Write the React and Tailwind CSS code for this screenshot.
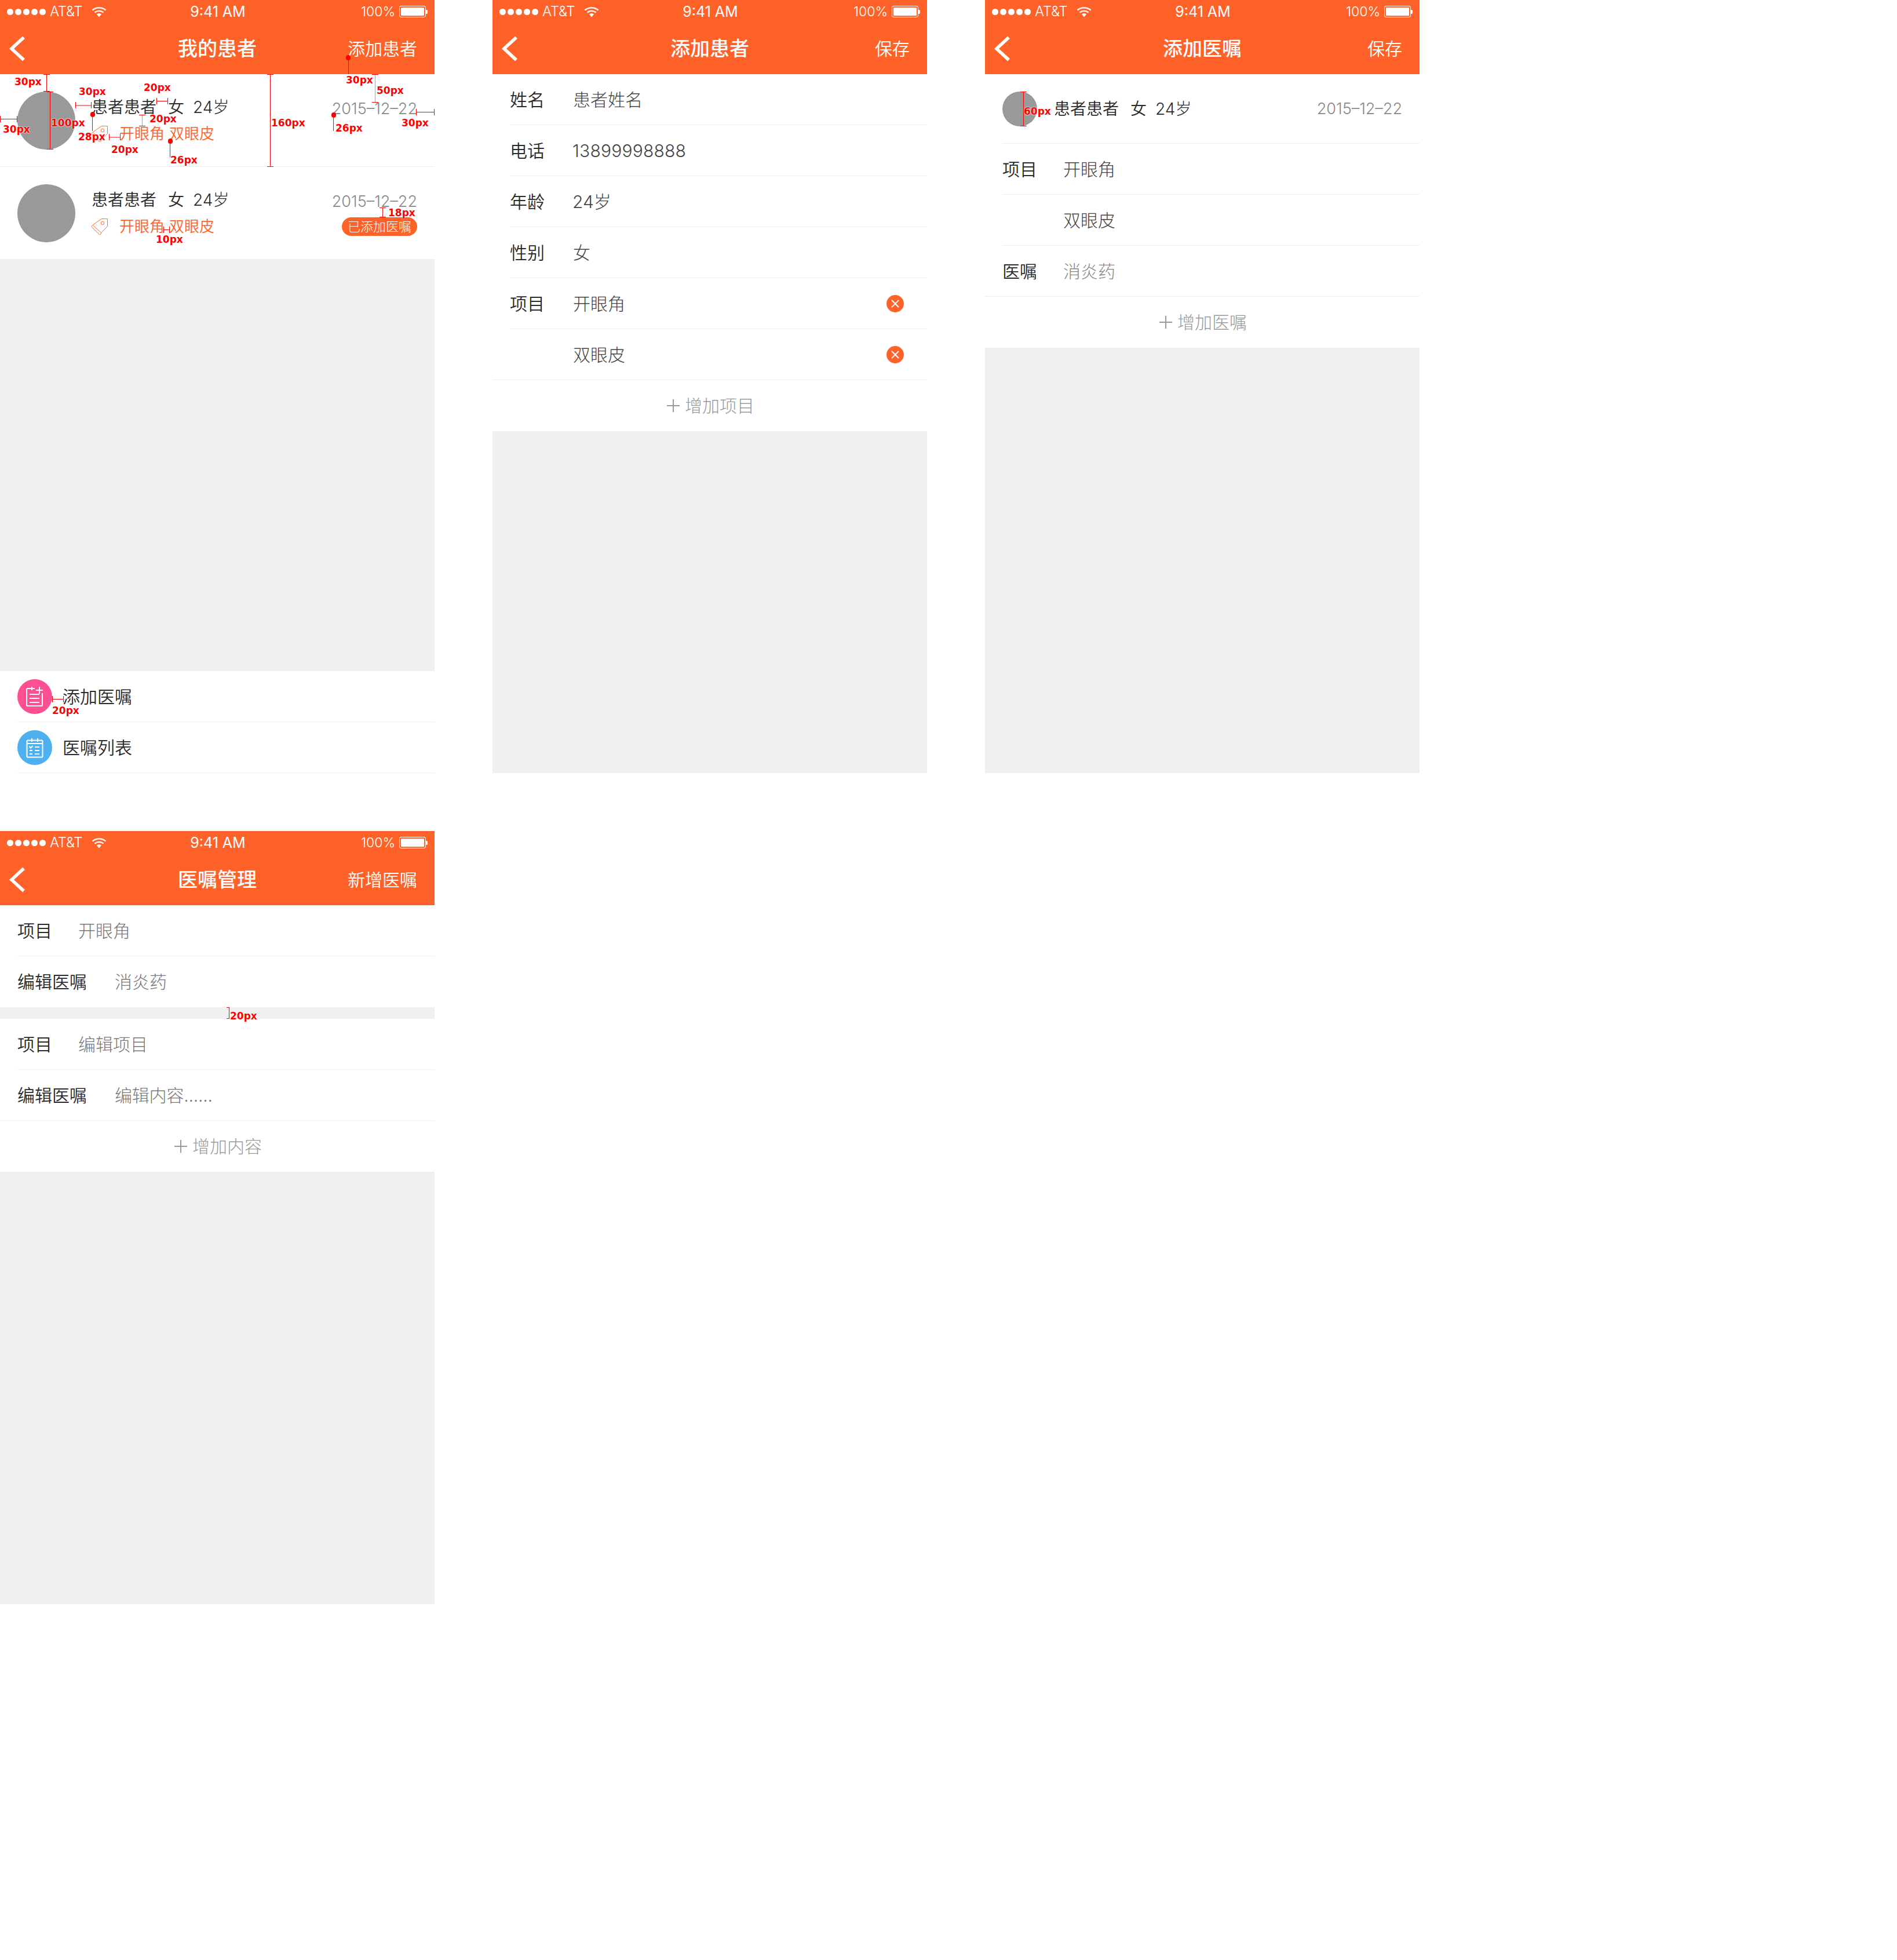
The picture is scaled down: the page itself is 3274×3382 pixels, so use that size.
import React from "react";
import clsx from "clsx";

function Mark({ className, children }) {
  return (
    <div className={clsx("absolute font-['DejaVu_Sans'] font-bold text-[17px] leading-[18px] text-[#f00] whitespace-nowrap [text-shadow:0_0_2px_#fff,0_0_2px_#fff]", className)}>
      {children}
    </div>
  );
}
function VDim({ className, soft }) {
  return (
    <div className={clsx("absolute w-[11px] border-y border-[#f00]", className)}>
      <div className={clsx("mx-auto w-px h-full", soft ? "bg-[#ff8080] w-[2px]" : "bg-[#f00]")} />
    </div>
  );
}
function HDim({ className, soft }) {
  return (
    <div className={clsx("absolute h-[11px] border-x border-[#f00] flex items-center", className)}>
      <div className={clsx("w-full", soft ? "bg-[#ff8080] h-[2px]" : "bg-[#f00] h-px")} />
    </div>
  );
}
function Leader({ className }) {
  return (
    <div className={clsx("absolute w-[9px] flex flex-col items-center", className)}>
      <div className="w-[8px] h-[9px] rounded-full bg-[#f00] shrink-0" />
      <div className="w-px flex-1 bg-[#f00]" />
    </div>
  );
}

function Wifi() {
  return (
    <svg width="26" height="19" viewBox="0 0 26 19" fill="none" stroke="#fff" strokeWidth="2.4">
      <path d="M1.5 6.5C8 1 18 1 24.5 6.5" />
      <path d="M5.5 10.5C10 7 16 7 20.5 10.5" />
      <path d="M9 13.5C11.5 11.5 14.5 11.5 17 13.5L13 18.5Z" fill="#fff" stroke="none" />
    </svg>
  );
}

function StatusBar() {
  return (
    <div className="h-[40px] grid grid-cols-[1fr_auto_1fr] items-center pl-[12px] pr-[12px] text-white leading-none font-light">
      <div className="flex items-center">
        <div className="flex gap-[3px]">
          <div className="w-[11px] h-[11px] rounded-full bg-white" />
          <div className="w-[11px] h-[11px] rounded-full bg-white" />
          <div className="w-[11px] h-[11px] rounded-full bg-white" />
          <div className="w-[11px] h-[11px] rounded-full bg-white" />
          <div className="w-[11px] h-[11px] rounded-full bg-white" />
        </div>
        <span className="ml-[7px] w-[58px] whitespace-nowrap text-[24px] tracking-[-0.3px]">AT&amp;T</span>
        <span className="ml-[14px] flex"><Wifi /></span>
      </div>
      <div className="text-[25px] font-normal ml-[2px]">9:41 AM</div>
      <div className="flex items-center justify-end">
        <span className="text-[23px]">100%</span>
        <div className="ml-[7px] w-[46px] h-[20px] border border-white rounded-[3px] p-[2px]">
          <div className="w-full h-full bg-white rounded-[1px]" />
        </div>
        <div className="w-[3px] h-[7px] bg-white rounded-r-[2px]" />
      </div>
    </div>
  );
}

function Header({ title, action }) {
  return (
    <div className="bg-[#ff6228] shrink-0">
      <StatusBar />
      <div className="h-[88px] grid grid-cols-[1fr_auto_1fr] items-center px-[30px] text-white">
        <svg className="-ml-[15px]" width="28" height="44" viewBox="0 0 28 44" fill="none" stroke="#fff" strokeWidth="5.5" strokeLinecap="square">
          <path d="M24 4.5L5 22L24 39.5" />
        </svg>
        <div className="text-[34px] font-medium leading-none">{title}</div>
        <div className="text-[30px] leading-none text-right font-[350]">{action}</div>
      </div>
    </div>
  );
}

function Tag() {
  return (
    <svg width="28" height="29" viewBox="0 0 28 29" fill="none" stroke="#ff6a2e" strokeWidth="1" strokeLinejoin="round">
      <path d="M17 .6H27.5V13.5L16.7 24.7L2 11.3Z" />
      <path d="M2 11.3L.8 12.6C.2 13.3.2 14.6.8 15.2L12.5 26.8C13.6 27.8 15.2 27.8 16 26.8L16.7 24.7" />
      <circle cx="19" cy="8" r="2.8" />
    </svg>
  );
}

function PersonLine() {
  return (
    <div className="flex items-center gap-[20px] text-[28px] leading-[28px] text-[#2a2a2a] font-[350]">
      <span>患者患者</span>
      <span className="-mr-[5px]">女</span>
      <span className="font-light">24岁</span>
    </div>
  );
}

function PatientRow({ badge }) {
  return (
    <div className="h-[160px] flex pl-[30px] pr-[30px] border-b border-[#eee] shrink-0">
      <div className="w-[100px] h-[100px] rounded-full bg-[#999] mt-[30px] shrink-0" />
      <div className="ml-[28px] flex flex-col justify-center gap-[19px]">
        <PersonLine />
        <div className="flex items-center h-[26px] text-[26px] leading-[26px] text-[#ff6228] font-[350]">
          <span className="flex"><Tag /></span>
          <span className="ml-[20px]">开眼角</span>
          <span className="ml-[8px]">双眼皮</span>
        </div>
      </div>
      <div className="ml-auto pt-[47px] flex flex-col items-end">
        <div className="text-[27px] leading-[26px] text-[#888] font-light">2015–12–22</div>
        {badge && (
          <div className="mt-[14px] h-[32px] w-[130px] rounded-full bg-[#ff6228] text-white text-[22px] leading-[32px] text-center font-light">已添加医嘱</div>
        )}
      </div>
    </div>
  );
}

function FormRow({ label, value, labelClass, valueClass, full, children }) {
  return (
    <div className={clsx("h-[88px] flex items-center border-b border-[#eee] shrink-0", full ? "pl-[30px]" : "ml-[30px]")}>
      <div className={clsx("text-[30px] leading-none text-[#2a2a2a] shrink-0 font-[350]", labelClass)}>{label}</div>
      <div className={clsx("text-[30px] leading-none font-light", valueClass)}>{value}</div>
      {children}
    </div>
  );
}

function Remove() {
  return (
    <svg className="ml-auto mr-[40px]" width="30" height="30" viewBox="0 0 30 30">
      <circle cx="15" cy="15" r="15" fill="#ff6228" />
      <path d="M9.5 9.5L20.5 20.5M20.5 9.5L9.5 20.5" stroke="#fff" strokeWidth="2" strokeLinecap="round" />
    </svg>
  );
}

function AddRow({ text }) {
  return (
    <div className="h-[88px] pl-[3px] flex items-center justify-center shrink-0 text-[30px] leading-none text-[#999] font-light">
      <svg width="22" height="22" viewBox="0 0 22 22" stroke="#999" strokeWidth="2">
        <path d="M11 0V22M0 11H22" />
      </svg>
      <span className="ml-[9px]">{text}</span>
    </div>
  );
}

function PinkIcon() {
  return (
    <svg width="60" height="60" viewBox="0 0 60 60" fill="none">
      <circle cx="30" cy="30" r="30" fill="#ff4f93" />
      <g stroke="#fff" strokeWidth="2">
        <path d="M30 16H17.5C16.6 16 16 16.6 16 17.5V44.5C16 45.4 16.6 46 17.5 46H41.5C42.4 46 43 45.4 43 44.5V24" />
        <path d="M25 13V19M38 13V25M32 19H44" />
        <path d="M21 26H38M21 33H38M21 40H38" />
      </g>
    </svg>
  );
}

function BlueIcon() {
  return (
    <svg width="60" height="60" viewBox="0 0 60 60" fill="none">
      <circle cx="30" cy="30" r="30" fill="#4fb0f0" />
      <g stroke="#fff" strokeWidth="2">
        <rect x="16.5" y="17.5" width="27" height="29" rx="1.5" />
        <path d="M16 23H44M25 14V20M35 14V20" />
        <path d="M20.5 28L23 30.5L26.5 27" />
        <path d="M30 29H38M21 35H26M30 35H38M21 41H26M30 41H38" />
      </g>
    </svg>
  );
}

function MenuRow({ icon, text }) {
  return (
    <div className="h-[88px] ml-[30px] flex items-center border-b border-[#eee] shrink-0">
      {icon}
      <span className="ml-[18px] text-[30px] leading-none text-[#2a2a2a] font-[350]">{text}</span>
    </div>
  );
}

function Phone({ children }) {
  return <div className="relative w-[750px] h-[1334px] bg-white flex flex-col shrink-0">{children}</div>;
}
function Fill() {
  return <div className="flex-1 bg-[#f0f0f0]" />;
}

export default function App() {
  return (
    <div className="w-[3274px] h-[3382px] bg-white flex flex-col gap-[100px] font-['Inter','Noto_Sans_CJK_SC',sans-serif]">
      <div className="flex gap-[100px]">
        <Phone>
          <Header title="我的患者" action="添加患者" />
          <PatientRow />
          <PatientRow badge />
          <Fill />
          <MenuRow icon={<PinkIcon />} text="添加医嘱" />
          <MenuRow icon={<BlueIcon />} text="医嘱列表" />

          <VDim className="left-[75px] top-[128px] h-[30px]" />
          <Mark className="left-[25px] top-[132px]">30px</Mark>
          <VDim className="left-[81px] top-[158px] h-[100px]" />
          <Mark className="left-[88px] top-[203px]">100px</Mark>
          <HDim className="left-0 top-[200px] w-[30px]" />
          <Mark className="left-[5px] top-[214px]">30px</Mark>
          <HDim className="left-[130px] top-[176px] w-[28px]" soft />
          <Mark className="left-[136px] top-[149px]">30px</Mark>
          <Leader className="left-[155px] top-[193px] h-[33px]" />
          <Mark className="left-[135px] top-[227px]">28px</Mark>
          <Mark className="left-[248px] top-[142px]">20px</Mark>
          <HDim className="left-[270px] top-[169px] w-[20px]" />
          <VDim className="left-[240px] top-[198px] h-[20px]" soft />
          <Mark className="left-[258px] top-[196px]">20px</Mark>
          <HDim className="left-[188px] top-[231px] w-[20px]" soft />
          <Mark className="left-[192px] top-[249px]">20px</Mark>
          <Leader className="left-[289px] top-[239px] h-[32px]" />
          <Mark className="left-[294px] top-[267px]">26px</Mark>
          <VDim className="left-[461px] top-[128px] h-[160px]" />
          <Mark className="left-[468px] top-[203px]">160px</Mark>
          <div className="absolute left-[601px] top-[99px] w-px h-[29px] bg-[#f00]" />
          <div className="absolute left-[597px] top-[95px] w-[8px] h-[9px] rounded-full bg-[#f00]" />
          <Mark className="left-[597px] top-[129px]">30px</Mark>
          <VDim className="left-[642px] top-[128px] h-[49px]" soft />
          <Mark className="left-[650px] top-[147px]">50px</Mark>
          <HDim className="left-[718px] top-[188px] w-[32px]" />
          <Mark className="left-[693px] top-[203px]">30px</Mark>
          <Leader className="left-[571px] top-[194px] h-[32px]" />
          <Mark className="left-[579px] top-[212px]">26px</Mark>
          <VDim className="left-[655px] top-[358px] h-[17px]" />
          <Mark className="left-[670px] top-[358px]">18px</Mark>
          <HDim className="left-[282px] top-[391px] w-[11px]" />
          <Mark className="left-[269px] top-[404px]">10px</Mark>
          <HDim className="left-[90px] top-[1201px] w-[20px]" />
          <Mark className="left-[90px] top-[1217px]">20px</Mark>
        </Phone>

        <Phone>
          <Header title="添加患者" action="保存" />
          <FormRow label="姓名" value="患者姓名" labelClass="w-[109px]" valueClass="text-[#444]" />
          <FormRow label="电话" value="13899998888" labelClass="w-[108px]" valueClass="text-[#444] tracking-[0.2px]" />
          <FormRow label="年龄" value="24岁" labelClass="w-[108px]" valueClass="text-[#444]" />
          <FormRow label="性别" value="女" labelClass="w-[109px]" valueClass="text-[#444]" />
          <FormRow label="项目" value="开眼角" labelClass="w-[109px]" valueClass="text-[#444]"><Remove /></FormRow>
          <FormRow label="" value="双眼皮" labelClass="w-[109px]" valueClass="text-[#444]" full><Remove /></FormRow>
          <AddRow text="增加项目" />
          <Fill />
        </Phone>

        <Phone>
          <Header title="添加医嘱" action="保存" />
          <div className="h-[120px] ml-[30px] pr-[30px] flex items-center border-b border-[#eee] shrink-0">
            <div className="w-[60px] h-[60px] rounded-full bg-[#999] shrink-0" />
            <div className="ml-[29px]"><PersonLine /></div>
            <div className="ml-auto text-[27px] leading-none text-[#888] font-light">2015–12–22</div>
          </div>
          <FormRow label="项目" value="开眼角" labelClass="w-[105px]" valueClass="text-[#444]" />
          <FormRow label="" value="双眼皮" labelClass="w-[105px]" valueClass="text-[#444]" />
          <FormRow label="医嘱" value="消炎药" labelClass="w-[105px]" valueClass="text-[#888]" full />
          <AddRow text="增加医嘱" />
          <Fill />
          <VDim className="left-[61px] top-[158px] h-[60px]" />
          <Mark className="left-[67px] top-[183px]">60px</Mark>
        </Phone>
      </div>

      <Phone>
        <Header title="医嘱管理" action="新增医嘱" />
        <FormRow label="项目" value="开眼角" labelClass="w-[105px]" valueClass="text-[#777]" />
        <div className="h-[88px] pl-[30px] flex items-center shrink-0">
          <div className="w-[168px] text-[30px] leading-none text-[#2a2a2a] font-[350]">编辑医嘱</div>
          <div className="text-[30px] leading-none text-[#777] font-light">消炎药</div>
        </div>
        <div className="h-[20px] bg-[#f0f0f0] shrink-0" />
        <FormRow label="项目" value="编辑项目" labelClass="w-[105px]" valueClass="text-[#777]" />
        <FormRow label="编辑医嘱" value="编辑内容......" labelClass="w-[168px]" valueClass="text-[#777] tracking-[-0.2px]" full />
        <AddRow text="增加内容" />
        <Fill />
        <div className="absolute left-[391px] top-[304px] w-[5px] h-[20px] border-y border-r border-[#f00]" />
        <Mark className="left-[397px] top-[310px]">20px</Mark>
      </Phone>
    </div>
  );
}
